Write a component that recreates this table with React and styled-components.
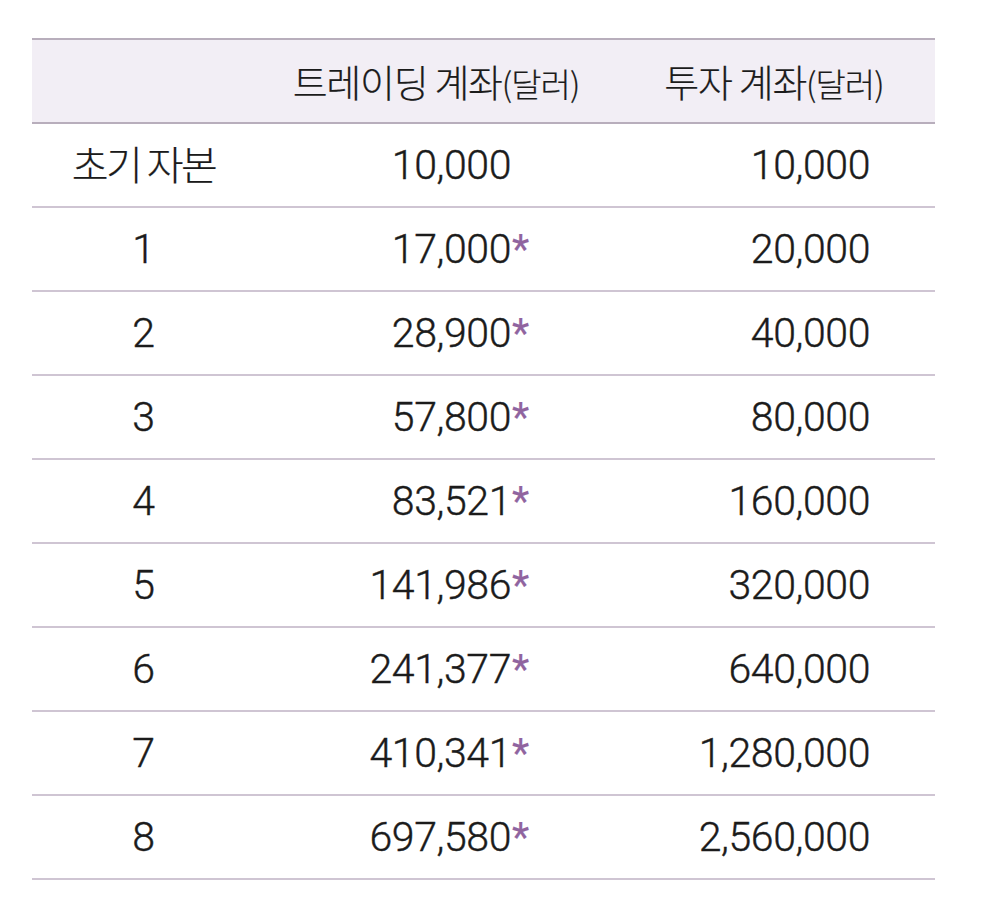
import React from "react";
import styled, { createGlobalStyle } from "styled-components";

const Global = createGlobalStyle`
  html, body { margin: 0; padding: 0; background: #ffffff; }
  body { font-family: Roboto, "Noto Sans CJK KR", sans-serif; color: #1b1b1b; }
`;

const Page = styled.div`
  padding: 38px 49px 0 32px;
`;

const Table = styled.div`
  width: 903px;
  border-top: 2px solid #b8aebc;
`;

const Row = styled.div`
  display: grid;
  grid-template-columns: 223px 362px 318px;
  height: 82px;
  align-items: center;
  background: ${(p) => (p.$head ? "#f2eef5" : "transparent")};
  border-bottom: 2px solid ${(p) => (p.$head ? "#b8aebc" : "#cfc5d3")};
`;

const HeadCell = styled.div`
  text-align: center;
  font-family: "Noto Sans CJK KR", sans-serif;
  font-weight: 300;
  font-size: 38px;
  letter-spacing: -1.3px;
  line-height: 1;
  color: #1b1b1b;
  -webkit-text-stroke: 0.2px #1b1b1b;
  padding-right: ${(p) => p.$shift || 0}px;
`;

const Paren = styled.span`
  font-size: 33px;
  letter-spacing: -1px;
`;

const LabelCell = styled.div`
  text-align: center;
  font-size: 41px;
  font-weight: 300;
  line-height: 1;
  -webkit-text-stroke: 0.4px #1b1b1b;
`;

const Korean = styled.span`
  font-family: "Noto Sans CJK KR", sans-serif;
  font-size: 40px;
  font-weight: 300;
  letter-spacing: -2.5px;
  -webkit-text-stroke: 0.2px #1b1b1b;
`;

const NumCell = styled.div`
  text-align: right;
  font-size: 41px;
  font-weight: 300;
  letter-spacing: -0.4px;
  line-height: 1;
  -webkit-text-stroke: 0.4px #1b1b1b;
  padding-right: ${(p) => p.$pad}px;
  white-space: nowrap;
`;

const Star = styled.span`
  display: inline-block;
  width: 17px;
  padding-left: 1px;
  text-align: left;
  font-size: 40px;
  font-weight: 400;
  letter-spacing: 0;
  color: #90649f;
  -webkit-text-stroke: 0.2px #90649f;
  visibility: ${(p) => (p.$hidden ? "hidden" : "visible")};
`;

const rows = [
  { label: "초기 자본", trade: "10,000", star: false, invest: "10,000" },
  { label: "1", trade: "17,000", star: true, invest: "20,000" },
  { label: "2", trade: "28,900", star: true, invest: "40,000" },
  { label: "3", trade: "57,800", star: true, invest: "80,000" },
  { label: "4", trade: "83,521", star: true, invest: "160,000" },
  { label: "5", trade: "141,986", star: true, invest: "320,000" },
  { label: "6", trade: "241,377", star: true, invest: "640,000" },
  { label: "7", trade: "410,341", star: true, invest: "1,280,000" },
  { label: "8", trade: "697,580", star: true, invest: "2,560,000" },
];

export default function App() {
  return (
    <>
      <Global />
      <Page>
        <Table>
          <Row $head>
            <HeadCell />
            <HeadCell>
              트레이딩 계좌<Paren>(달러)</Paren>
            </HeadCell>
            <HeadCell $shift={4}>
              투자 계좌<Paren>(달러)</Paren>
            </HeadCell>
          </Row>
          {rows.map((r) => (
            <Row key={r.label}>
              <LabelCell>
                {/^\d+$/.test(r.label) ? r.label : <Korean>{r.label}</Korean>}
              </LabelCell>
              <NumCell $pad={88}>
                {r.trade}
                <Star $hidden={!r.star}>*</Star>
              </NumCell>
              <NumCell $pad={65}>{r.invest}</NumCell>
            </Row>
          ))}
        </Table>
      </Page>
    </>
  );
}
